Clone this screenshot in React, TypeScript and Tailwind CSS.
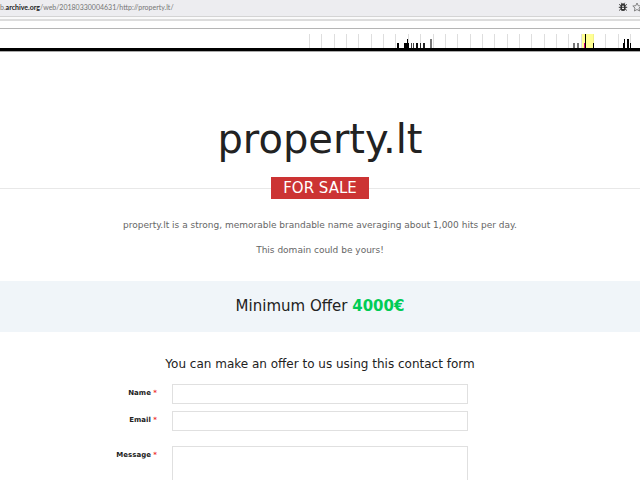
const months = Array.from({ length: 27 }, (_, i) => Math.round(9 + i * 12.35));

// captures per month: x, width, height, colour
const captures: [number, number, number, string][] = [
  [97, 2, 5, "#000"],
  [104, 5, 5, "#000"],
  [107, 1, 9, "#000"],
  [111, 1, 5, "#444"],
  [113, 1, 5, "#444"],
  [116, 2, 5, "#111"],
  [120, 1, 5, "#222"],
  [123, 2, 5, "#222"],
  [130, 2, 9, "#777"],
  [273, 2, 5, "#777"],
  [277, 2, 5, "#777"],
  [284, 2, 5, "#e0007f"],
  [285, 1, 14, "#000"],
  [293, 1, 5, "#000"],
  [323, 1, 5, "#000"],
  [324, 1, 9, "#000"],
  [327, 2, 9, "#000"],
  [330, 1, 5, "#000"],
];

function BrowserBar() {
  return (
    <header>
      <div className="flex h-4 items-center justify-between bg-[#ededf0] pb-0.5">
        <p className="font-[Lato,sans-serif] text-[7px] leading-[14px] text-[#757575]">
          b.<span className="font-bold text-[#222]">archive.org</span>/web/20180330004631/http://property.lt/
        </p>
        <div className="-mr-0.5 flex items-center gap-1">
          <svg viewBox="0 0 10 10" className="h-2.5 w-2.5" fill="none" stroke="#333" strokeWidth="1">
            <path d="M1.2 2.4 2.8 3.6M8.8 2.4 7.2 3.6M0.8 5.3H9.2M1.2 8.4 2.8 7M8.8 8.4 7.2 7M3.3 .8l.9 1.2M6.7 .8l-.9 1.2" />
            <rect x="2.5" y="1.5" width="5" height="7.5" rx="2.5" fill="#333" stroke="none" />
            <path d="M4 4.2H6M4 6.4H6" stroke="#ededf0" strokeWidth="1.1" />
          </svg>
          <svg viewBox="0 0 10 10" className="h-2.5 w-2.5" fill="none" stroke="#777" strokeWidth="0.9" strokeLinejoin="round">
            <path d="M5 1 6.2 3.7 9.2 4 7 6 7.6 9 5 7.5 2.4 9 3 6 0.8 4 3.8 3.7Z" />
          </svg>
        </div>
      </div>
      <div className="h-[3px] border-t border-[#d4d4d4] bg-[#fafafa]" />
      <div className="h-0.5 bg-[#dcdcdc]" />
    </header>
  );
}

function ArchiveTimeline() {
  return (
    <div className="mt-[7px] border-t border-[#b5b5b5] pt-[5px]">
      <svg viewBox="0 0 340 14" className="ml-auto h-3.5 w-[340px]" shapeRendering="crispEdges">
        <rect x="282" y="0" width="12" height="14" fill="#ffff94" />
        {months.map((x) => (
          <rect key={x} x={x} y="0" width="1" height="14" fill={x > 281 && x < 295 ? "#f1f18a" : "#dedede"} />
        ))}
        {captures.map(([x, width, height, fill]) => (
          <rect key={`${x}-${height}`} x={x} y={14 - height} width={width} height={height} fill={fill} />
        ))}
      </svg>
      <div className="h-1 border-b border-[#aaa] bg-black" />
    </div>
  );
}

function FieldLabel({ id, text }: { id: string; text: string }) {
  return (
    <label htmlFor={id} className="w-[157px] shrink-0 pt-px text-right text-[7px] leading-4 font-bold text-[#222]">
      {text} <span className="text-[#e33]">*</span>
    </label>
  );
}

const fieldClass = "block w-[296px] border border-[#e0e0e0] bg-white px-2 text-[9px] outline-none";

export default function App() {
  return (
    <div className="h-screen overflow-hidden bg-white font-['DejaVu_Sans',Verdana,sans-serif] text-[#222]">
      <BrowserBar />
      <ArchiveTimeline />

      <main>
        <section className="pt-[63px] text-center">
          <h1 className="text-[40px] leading-[48px]">property.lt</h1>
          <div className="mt-[14px] flex items-center">
            <span className="h-px flex-1 bg-[#e8e8e8]" />
            <span className="bg-[#cc3333] px-3 text-[15px] leading-[22px] text-white">FOR SALE</span>
            <span className="h-px flex-1 bg-[#e8e8e8]" />
          </div>
          <div className="mt-[18px] flex flex-col gap-[9px] text-[9px] leading-4 text-[#666]">
            <p>property.lt is a strong, memorable brandable name averaging about 1,000 hits per day.</p>
            <p>This domain could be yours!</p>
          </div>
        </section>

        <section className="mt-[23px] bg-[#f0f5f9] py-[15px] text-center">
          <h2 className="text-[15px] leading-[21px]">
            Minimum Offer <strong className="text-[#00cc55]">4000€</strong>
          </h2>
        </section>

        <form className="pt-[22px]">
          <h3 className="text-center text-[12px] leading-5">You can make an offer to us using this contact form</h3>
          <div className="mx-auto mt-[10px] flex max-w-[640px] flex-col gap-[7px]">
            <div className="flex gap-[15px]">
              <FieldLabel id="name" text="Name" />
              <input id="name" type="text" className={`${fieldClass} h-5`} />
            </div>
            <div className="flex gap-[15px]">
              <FieldLabel id="email" text="Email" />
              <input id="email" type="email" className={`${fieldClass} h-5`} />
            </div>
            <div className="flex gap-[15px] pt-2">
              <FieldLabel id="message" text="Message" />
              <textarea id="message" className={`${fieldClass} h-20 resize-none`} />
            </div>
          </div>
        </form>
      </main>
    </div>
  );
}
